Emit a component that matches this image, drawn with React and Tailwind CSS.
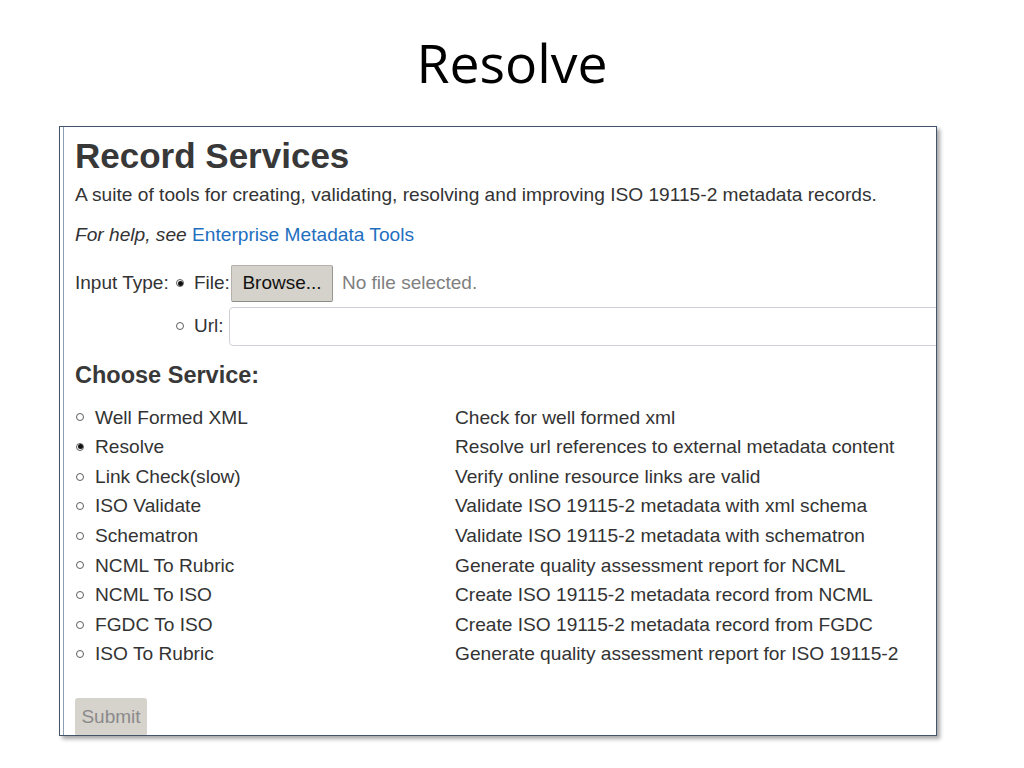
import React from "react";

const services = [
  ["Well Formed XML", "Check for well formed xml", false],
  ["Resolve", "Resolve url references to external metadata content", true],
  ["Link Check(slow)", "Verify online resource links are valid", false],
  ["ISO Validate", "Validate ISO 19115-2 metadata with xml schema", false],
  ["Schematron", "Validate ISO 19115-2 metadata with schematron", false],
  ["NCML To Rubric", "Generate quality assessment report for NCML", false],
  ["NCML To ISO", "Create ISO 19115-2 metadata record from NCML", false],
  ["FGDC To ISO", "Create ISO 19115-2 metadata record from FGDC", false],
  ["ISO To Rubric", "Generate quality assessment report for ISO 19115-2", false],
];

function Radio({ checked }) {
  return (
    <span className="inline-flex items-center justify-center w-[8px] h-[8px] rounded-full border border-[#5e5e5e] bg-white shrink-0">
      {checked ? <span className="block w-[5px] h-[5px] rounded-full bg-[#111]" /> : null}
    </span>
  );
}

export default function App() {
  return (
    <div className="w-[1024px] h-[768px] bg-white overflow-hidden">
      <div className="h-[126px] pt-[37px] text-center">
        <div
          className="text-[53.5px] leading-[52px] text-black"
          style={{ fontFamily: '"Open Sans", "Noto Sans", sans-serif' }}
        >
          Resolve
        </div>
      </div>
      <div className="ml-[59px] w-[878px] h-[610px] border border-[#44546a] bg-white shadow-[3px_3px_4px_rgba(0,0,0,0.35)] overflow-hidden pl-[3px]">
        <div
          className="h-full border-l border-[#8f9db3] pl-[11px] pt-[9px] text-[#333]"
          style={{ fontFamily: '"Liberation Sans", Arial, sans-serif' }}
        >
          <div className="text-[35px] leading-[40px] font-bold text-[#383838]">Record Services</div>
          <div className="mt-[7px] text-[19.15px] leading-[24px]">
            A suite of tools for creating, validating, resolving and improving ISO 19115-2 metadata records.
          </div>
          <div className="mt-[16px] text-[19.15px] leading-[24px]">
            <span className="italic">For help, see </span>
            <span className="text-[#1f6fbf]">Enterprise Metadata Tools</span>
          </div>
          <div className="mt-[17px] flex items-center h-[38px] text-[19px] leading-[24px]">
            <span className="w-[101px] shrink-0">Input Type:</span>
            <div className="flex items-center w-[55px] shrink-0">
              <Radio checked />
              <span className="ml-[10px]">File:</span>
            </div>
            <div className="h-[37px] w-[102px] shrink-0 flex items-center justify-center bg-[#d5d1cb] border border-[#b5b2ad] border-b-[#8f8c88] border-r-[#9a9793] rounded-[2px] text-[#111]">
              Browse...
            </div>
            <span className="ml-[9px] text-[#808080]">No file selected.</span>
          </div>
          <div className="mt-[4px] flex items-center h-[40px] text-[19px] leading-[24px]">
            <span className="w-[101px] shrink-0" />
            <div className="flex items-center w-[53px] shrink-0">
              <Radio />
              <span className="ml-[10px]">Url:</span>
            </div>
            <div className="h-[39px] w-[760px] shrink-0 border border-[#cfd2d8] rounded-[4px] bg-white" />
          </div>
          <div className="mt-[15px] text-[23.5px] leading-[28px] font-bold text-[#383838]">Choose Service:</div>
          <div className="mt-[13.6px]">
            {services.map(([name, desc, checked]) => (
              <div key={name} className="flex items-center h-[29.6px] text-[19.15px] leading-[29.6px]">
                <div className="w-[380px] shrink-0 flex items-center pl-[1px]">
                  <Radio checked={checked} />
                  <span className="ml-[11px]">{name}</span>
                </div>
                <span>{desc}</span>
              </div>
            ))}
          </div>
          <div className="mt-[29px] w-[72px] h-[38px] flex items-center justify-center bg-[#d6d2cc] rounded-[3px] text-[19px] text-[#8a8a8a]">
            Submit
          </div>
        </div>
      </div>
    </div>
  );
}
